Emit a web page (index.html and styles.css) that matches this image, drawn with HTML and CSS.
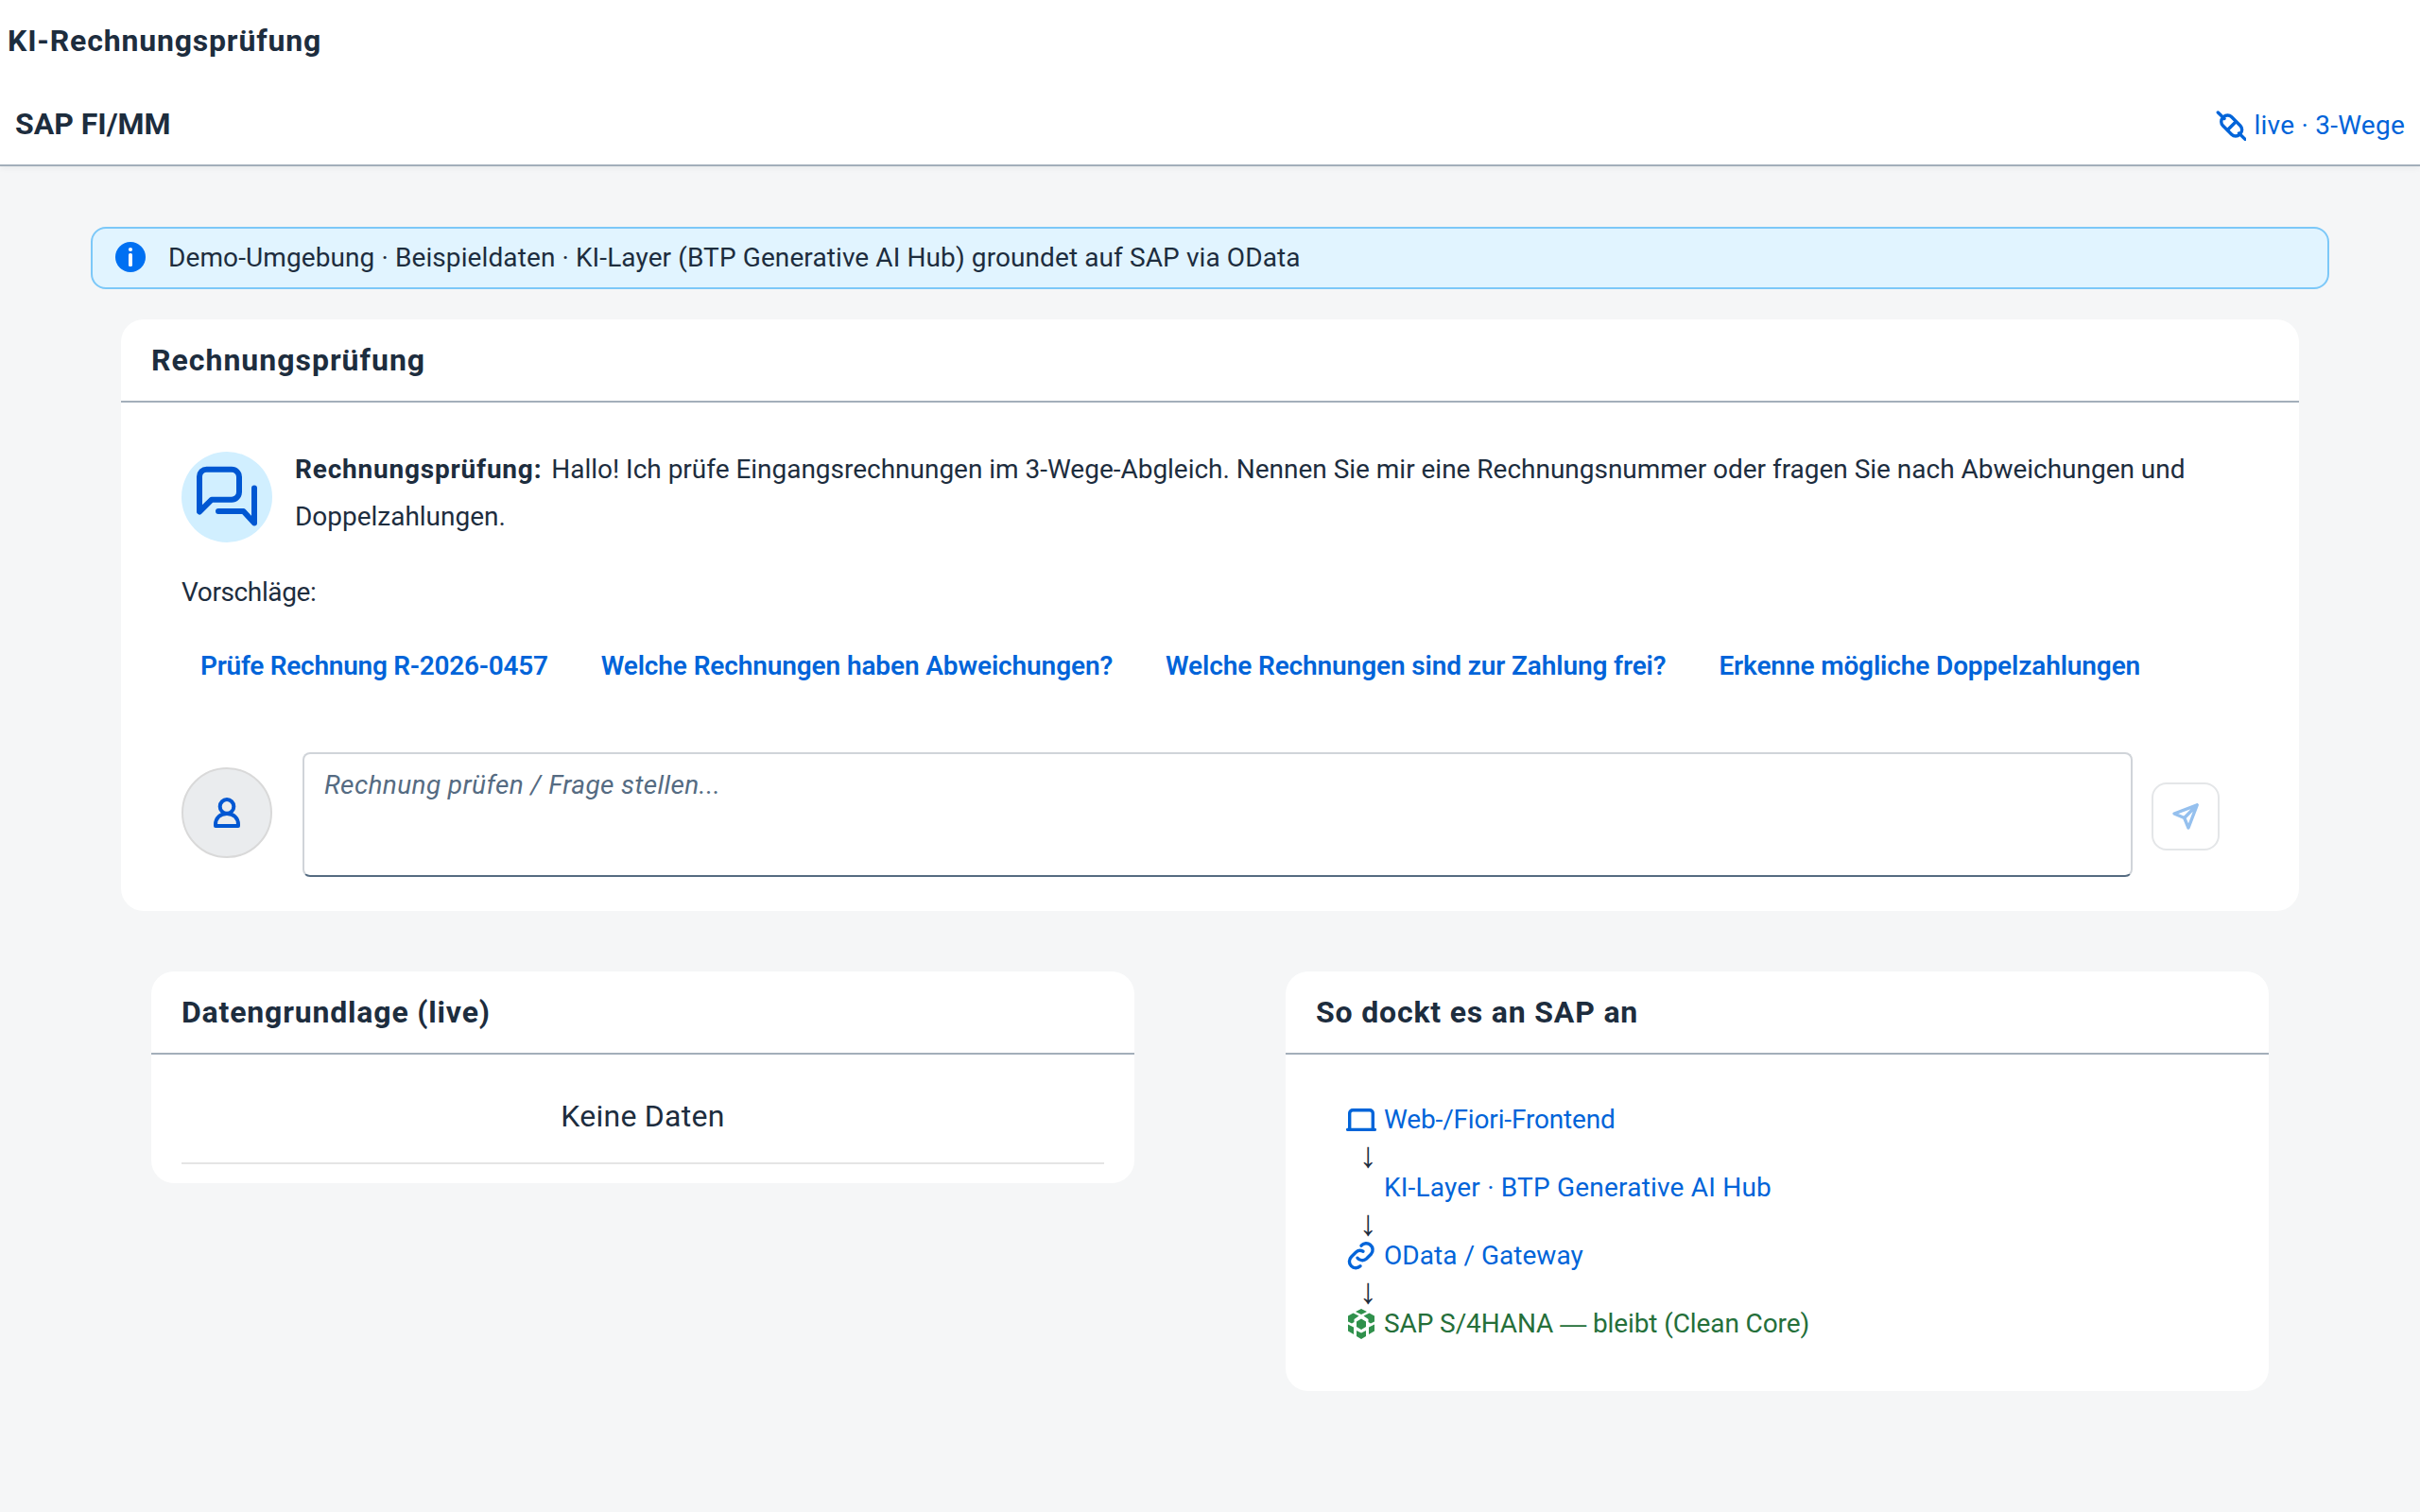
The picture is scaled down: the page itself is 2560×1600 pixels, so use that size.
FILE: index.html
```
<!DOCTYPE html>
<html lang="de">
<head>
  <meta charset="UTF-8">
  <meta name="viewport" content="width=device-width, initial-scale=1.0">
  <title>KI-Rechnungsprüfung</title>
  <link rel="stylesheet" href="styles.css">
</head>
<body>
  <header class="shell">
    <h1 class="title">KI-Rechnungsprüfung</h1>
    <div class="subbar">
      <h2>SAP FI/MM</h2>
      <span class="status live">
        <svg class="icon" viewBox="0 0 32 32">
          <path d="M2.3 2 9 8.5M24.5 24 31 30.4" />
          <rect x="4.2" y="9.5" width="25" height="13" rx="6" transform="rotate(45 16.7 16)" />
          <path d="M21 12 12.5 20.5" />
        </svg>
        live · 3-Wege
      </span>
    </div>
  </header>

  <main>
    <div class="strip">
      <svg class="icon-info" viewBox="0 0 32 32">
        <circle cx="16" cy="16" r="16" fill="#0070f2" />
        <circle cx="16" cy="8" r="2.1" fill="#fff" />
        <rect x="14" y="12" width="4" height="14" rx="1.6" fill="#fff" />
      </svg>
      <span>Demo-Umgebung · Beispieldaten · KI-Layer (BTP Generative AI Hub) groundet auf SAP via OData</span>
    </div>

    <section class="card chat">
      <h2 class="card-title">Rechnungsprüfung</h2>
      <div class="chat-body">
        <div class="message">
          <svg class="avatar bot" viewBox="0 0 96 96">
            <path d="M19 63.5V26.2a7.5 7.5 0 0 1 7.5-7.5H53a8 8 0 0 1 8 8V42.7a8 8 0 0 1-8 8H32Z" />
            <path d="M77 38.5V75.5L65.5 63H39" />
          </svg>
          <p><b>Rechnungsprüfung:</b> Hallo! Ich prüfe Eingangsrechnungen im 3-Wege-Abgleich. Nennen Sie mir eine Rechnungsnummer oder fragen Sie nach Abweichungen und Doppelzahlungen.</p>
        </div>

        <p class="hint">Vorschläge:</p>
        <div class="suggestions">
          <button type="button">Prüfe Rechnung R-2026-0457</button>
          <button type="button">Welche Rechnungen haben Abweichungen?</button>
          <button type="button">Welche Rechnungen sind zur Zahlung frei?</button>
          <button type="button">Erkenne mögliche Doppelzahlungen</button>
        </div>

        <form class="feed">
          <div class="avatar user">
            <svg class="icon-user" viewBox="0 0 32 32">
              <circle cx="16" cy="9.4" r="7.3" />
              <path d="M4 30V28.5C4 21.5 9 17 16 17s12 4.5 12 11.5V30Z" />
            </svg>
          </div>
          <textarea placeholder="Rechnung prüfen / Frage stellen..."></textarea>
          <button type="button" class="send" disabled>
            <svg class="icon" viewBox="0 0 32 32">
              <path d="M28.2 3.8 4 13l10.7 4.5L19 28ZM28.2 3.8 14.7 17.5" />
            </svg>
          </button>
        </form>
      </div>
    </section>

    <div class="columns">
      <section class="card">
        <h2 class="card-title">Datengrundlage (live)</h2>
        <div class="list">
          <p class="empty">Keine Daten</p>
        </div>
      </section>

      <section class="card">
        <h2 class="card-title">So dockt es an SAP an</h2>
        <div class="flow">
          <span class="status web">
            <svg class="icon" viewBox="0 0 32 32">
              <path d="M3.7 26V9a3.3 3.3 0 0 1 3.3-3.3h18A3.3 3.3 0 0 1 28.3 9v17M1.6 26.4h28.8" />
            </svg>
            Web-/Fiori-Frontend
          </span>
          <span class="arrow">↓</span>
          <span class="status layer">
            <span class="icon"></span>
            KI-Layer · BTP Generative AI Hub
          </span>
          <span class="arrow">↓</span>
          <span class="status">
            <svg class="icon" viewBox="0 0 32 32">
              <path d="M16 5.2a6.8 6.8 0 0 1 10.5 8.8l-5 5a6.5 6.5 0 0 1-9.5-.8" />
              <path d="M15 26.8a6.8 6.8 0 0 1-9.5-9.800l5-5a6.500 6.500 0 0 1 7.500-.8" />
            </svg>
            OData / Gateway
          </span>
          <span class="arrow">↓</span>
          <span class="status core">
            <svg class="icon" viewBox="0 0 32 32">
              <path d="M16 0l6 3-6 3-6-3ZM16 10.5l5 3v5.5l-5 3-5-3v-5.5ZM7.5 4.5l6 3-5 3.5v3l-2.5 1.5-4-2V7.5ZM24.5 4.5l5.5 3v6l-4 2-2.5-1.5v-3l-5-3.5ZM2 16.5l6 3v7.5l-6-3.5ZM30 16.5l-6 3v7.5l6-3.5ZM11 23l5 2.5 5-2.5v6l-5 3-5-3Z" />
            </svg>
            <span>SAP S/4HANA <span class="dash">—</span> bleibt (Clean Core)</span>
          </span>
        </div>
      </section>
    </div>
  </main>
</body>
</html>
```
FILE: styles.css
```
* {
  box-sizing: border-box;
}

body {
  margin: 0;
  min-height: 100vh;
  background-color: #f5f6f7;
  color: #1d2d3e;
  font-family: Roboto, "Liberation Sans", sans-serif;
  font-size: 28px;
  line-height: 34px;
}

h1, h2, p {
  margin: 0;
}

h1, h2 {
  font-size: 32px;
  font-weight: bold;
  letter-spacing: 0.82px;
}

button, textarea {
  font-family: inherit;
  font-size: inherit;
}

.icon {
  flex: none;
  width: 32px;
  height: 32px;
  fill: none;
  stroke: currentColor;
  stroke-width: 3.4;
  stroke-linecap: round;
  stroke-linejoin: round;
}

.shell {
  background-color: white;
  border-bottom: 2px solid #a3afba;
  box-shadow: 0 2px 6px rgba(34, 53, 72, 0.06);

  .title {
    height: 86px;
    line-height: 86px;
    padding-left: 8px;
  }

  .subbar {
    display: flex;
    justify-content: space-between;
    align-items: center;
    height: 88px;
    padding: 2px 16px 0;

    h2 {
      letter-spacing: 0;
    }
  }
}

.status {
  display: flex;
  align-items: center;
  gap: 8px;
  height: 34px;
  color: #0064d9;
  letter-spacing: 0.03px;
}

.live {
  margin-top: 3px;
  letter-spacing: 0.25px;
}

main {
  padding: 64px 96px;
}

.strip {
  display: flex;
  align-items: center;
  gap: 24px;
  height: 66px;
  padding: 0 24px 2px;
  background-color: #e1f4ff;
  border: 2px solid #7cc8f8;
  border-radius: 16px;
  letter-spacing: 0.1px;

  .icon-info {
    width: 32px;
    height: 32px;
  }

  span {
    padding-top: 2px;
  }
}

.card {
  background-color: white;
  border-radius: 24px;
}

.card-title {
  height: 88px;
  line-height: 86px;
  padding: 0 32px;
  border-bottom: 2px solid #a3afba;
}

.chat {
  margin: 32px 32px 0;

  .card-title {
    letter-spacing: 1px;
  }
}

.chat-body {
  padding: 46px 84px 36px 64px;
}

.avatar {
  flex: none;
  width: 96px;
  height: 96px;
  border-radius: 50%;
}

.bot {
  margin-top: 6px;
  background-color: #d1efff;
  fill: none;
  stroke: #0057d2;
  stroke-width: 6;
  stroke-linecap: round;
  stroke-linejoin: round;
}

.user {
  display: flex;
  align-items: center;
  justify-content: center;
  margin-top: 16px;
  background-color: #eaecee;
  border: 2px solid #d9d9d9;

  .icon-user {
    width: 32px;
    height: 32px;
    fill: none;
    stroke: #0057d2;
    stroke-width: 4;
    stroke-linejoin: round;
  }
}

.message {
  display: flex;
  gap: 24px;

  p {
    line-height: 50px;
    letter-spacing: -0.02px;
  }

  b {
    letter-spacing: 0.8px;
    margin-right: 3px;
  }
}

.hint {
  margin-top: 36px;
  letter-spacing: -0.38px;
}

.suggestions {
  display: flex;
  gap: 16px;
  margin-top: 24px;

  button {
    height: 72px;
    padding: 0 20px;
    border: none;
    border-radius: 16px;
    background-color: transparent;
    color: #0064d9;
    font-weight: 600;
    letter-spacing: -0.12px;
    white-space: nowrap;
    cursor: pointer;

    &:first-child {
      letter-spacing: -0.26px;
    }
  }
}

.feed {
  display: flex;
  align-items: flex-start;
  margin-top: 56px;

  textarea {
    flex: 1;
    height: 132px;
    margin: 0 20px 0 32px;
    padding: 16px 21px;
    border: 2px solid #d0d4d9;
    border-bottom-color: #556b81;
    border-radius: 8px;
    background-color: white;
    line-height: 34px;
    letter-spacing: 0.38px;
    resize: none;
    outline: none;

    &::placeholder {
      color: #556b82;
      font-style: italic;
    }
  }

  .send {
    display: flex;
    align-items: center;
    justify-content: center;
    width: 72px;
    height: 72px;
    margin-top: 32px;
    padding: 0;
    border: 2px solid #e4e6e8;
    border-radius: 16px;
    background-color: white;
    color: #95c0ee;
  }
}

.columns {
  display: grid;
  grid-template-columns: 1fr 1fr;
  align-items: start;
  gap: 160px;
  padding: 64px 64px 0;
}

.list {
  padding: 0 32px 20px;

  .empty {
    height: 116px;
    padding-top: 48px;
    border-bottom: 2px solid #e5e5e5;
    font-size: 32px;
    letter-spacing: 0.25px;
    text-align: center;
  }
}

.flow {
  padding: 51px 64px 53px;

  .status {
    height: 36px;
  }

  .web {
    letter-spacing: -0.15px;
  }

  .layer {
    letter-spacing: 0.2px;
  }

  .core {
    color: #256f3a;
    letter-spacing: -0.1px;

    .icon {
      fill: #30914c;
      stroke: none;
    }

    .dash {
      font-family: "Liberation Sans", sans-serif;
    }
  }

  .arrow {
    display: block;
    width: 46px;
    height: 36px;
    font-family: "Liberation Serif", serif;
    font-size: 38px;
    line-height: 38px;
    text-align: center;
  }
}
```
